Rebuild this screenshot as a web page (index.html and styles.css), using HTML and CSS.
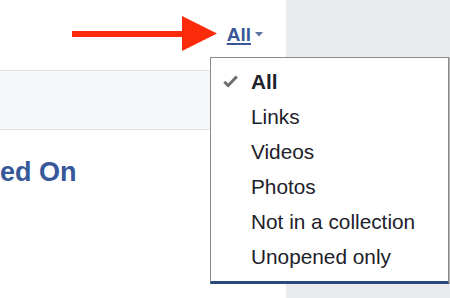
FILE: index.html
```html
<!DOCTYPE html>
<html>
<head>
<meta charset="utf-8">
<link rel="stylesheet" href="styles.css">
</head>
<body>
<div class="page">
  <div class="main">
    <div class="header">
      <svg class="arrow" width="145" height="36" viewBox="0 0 145 36">
        <rect x="0" y="15" width="112" height="6" fill="#fa2a0a"/>
        <polygon points="110,0 145,17.5 110,35" fill="#fa2a0a"/>
      </svg>
      <a class="filter" href="#">All</a>
      <svg class="caret" width="8" height="5" viewBox="0 0 8 5"><polygon points="0,0 8,0 4,4.5" fill="#5a6fa3"/></svg>
    </div>
    <div class="band"></div>
    <div class="content">
      <h2 class="title">ed On</h2>
    </div>
  </div>
  <div class="side"></div>
  <ul class="menu">
    <li class="item selected">
      <span class="slot"><svg width="15" height="13" viewBox="0 0 15 13"><path d="M1.3 6.8 L5.2 10.6 L13.8 1.4" fill="none" stroke="#6f6f6f" stroke-width="3" stroke-linejoin="round"/></svg></span>
      <span>All</span>
    </li>
    <li class="item"><span class="slot"></span><span>Links</span></li>
    <li class="item"><span class="slot"></span><span>Videos</span></li>
    <li class="item"><span class="slot"></span><span>Photos</span></li>
    <li class="item"><span class="slot"></span><span>Not in a collection</span></li>
    <li class="item"><span class="slot"></span><span>Unopened only</span></li>
  </ul>
</div>
</body>
</html>
```
FILE: styles.css
```css
html, body {
  margin: 0;
  padding: 0;
}
body {
  width: 450px;
  height: 298px;
  overflow: hidden;
  font-family: "Liberation Sans", Arial, sans-serif;
  background: #ffffff;
}
.page {
  position: relative;
  display: grid;
  grid-template-columns: 286px 1fr;
  height: 298px;
}
.main {
  background: #ffffff;
  display: flex;
  flex-direction: column;
}
.side {
  background: #e9ebee;
}
.header {
  height: 70px;
  display: flex;
  align-items: center;
  justify-content: flex-end;
  padding-right: 23px;
}
.arrow {
  display: block;
  margin-right: 10px;
  margin-top: -3px;
}
.filter {
  color: #365899;
  font-weight: bold;
  font-size: 19px;
  text-decoration: underline;
  text-decoration-thickness: 2px;
  text-underline-offset: 2px;
  line-height: 22px;
}
.caret {
  display: block;
  margin-left: 4px;
  margin-top: -2px;
}
.band {
  height: 58px;
  background: #f6f7f9;
  border-top: 1px solid #dddfe2;
  border-bottom: 1px solid #dddfe2;
}
.content {
  padding-top: 26px;
}
.title {
  margin: 0;
  font-size: 27px;
  line-height: 32px;
  font-weight: bold;
  color: #365899;
}
.menu {
  position: absolute;
  left: 210px;
  top: 57px;
  width: 237px;
  margin: 0;
  padding: 6px 0 7px;
  list-style: none;
  background: #ffffff;
  border: 1px solid #8a8a8a;
  border-bottom: 3px solid #29487d;
  box-shadow: 1px 0 0 #b5b5b5;
}
.item {
  display: flex;
  align-items: center;
  height: 35px;
  font-size: 20.8px;
  color: #1d2129;
}
.slot {
  width: 40px;
  display: flex;
  align-items: center;
  padding-left: 12px;
  box-sizing: border-box;
}
.selected {
  font-weight: bold;
}
```
